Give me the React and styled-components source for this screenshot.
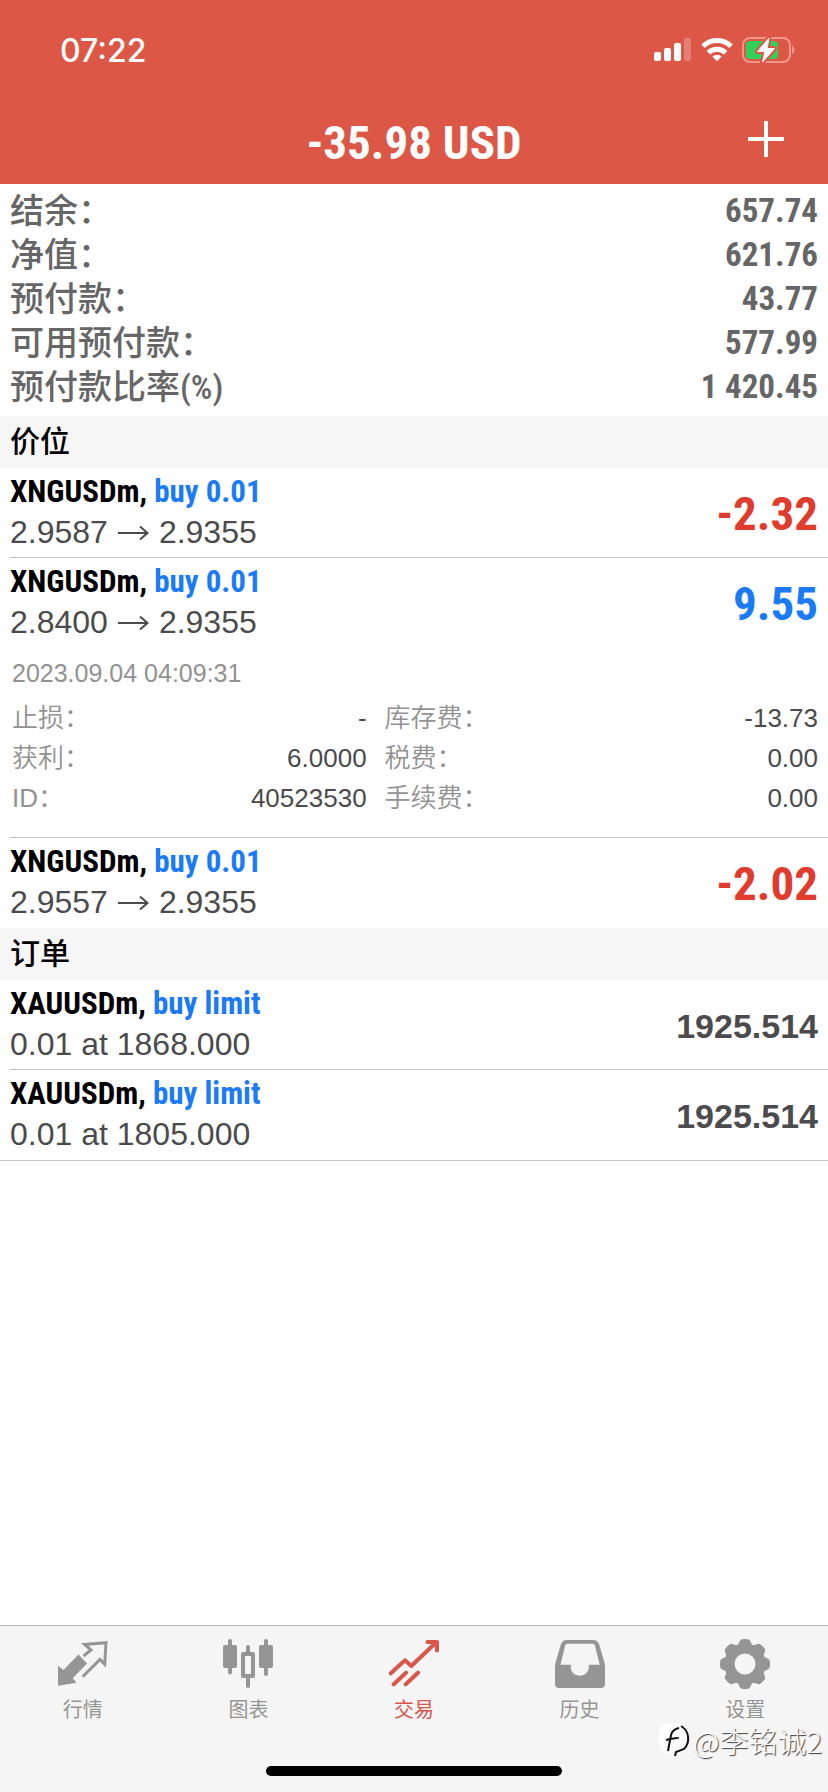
import React from 'react';
import styled, { createGlobalStyle } from 'styled-components';

const color = {
    header: '#dd5746',
    red: '#e13b2e',
    blue: '#1a7af8',
    text: '#4b4b4d',
    summary: '#666666',
    muted: '#929292',
    line: '#c6c6c8',
    band: '#f6f6f6',
};

const sans = '"Liberation Sans", "Noto Sans CJK SC", sans-serif';
const narrow = '"Liberation Sans Narrow", "Roboto Condensed", "Liberation Sans", "Noto Sans CJK SC", sans-serif';

const summary = [
    { label: '结余：', value: '657.74' },
    { label: '净值：', value: '621.76' },
    { label: '预付款：', value: '43.77' },
    { label: '可用预付款：', value: '577.99' },
    { label: '预付款比率(%)', value: '1 420.45' },
];

const positions = [
    { id: 1, symbol: 'XNGUSDm', side: 'buy 0.01', open: '2.9587', current: '2.9355', profit: '-2.32' },
    {
        id: 2,
        symbol: 'XNGUSDm',
        side: 'buy 0.01',
        open: '2.8400',
        current: '2.9355',
        profit: '9.55',
        time: '2023.09.04 04:09:31',
        details: [
            { label: '止损：', value: '-' },
            { label: '库存费：', value: '-13.73' },
            { label: '获利：', value: '6.0000' },
            { label: '税费：', value: '0.00' },
            { label: 'ID：', value: '40523530' },
            { label: '手续费：', value: '0.00' },
        ],
    },
    { id: 3, symbol: 'XNGUSDm', side: 'buy 0.01', open: '2.9557', current: '2.9355', profit: '-2.02' },
];

const orders = [
    { id: 1, symbol: 'XAUUSDm', side: 'buy limit', text: '0.01 at 1868.000', price: '1925.514' },
    { id: 2, symbol: 'XAUUSDm', side: 'buy limit', text: '0.01 at 1805.000', price: '1925.514' },
];

/**
 * Icons.
 */
const SignalIcon = () => (
    <svg width="38" height="24" viewBox="0 0 38 24" fill="#fff" aria-hidden="true">
        <rect x="0" y="14" width="7" height="9" rx="2" />
        <rect x="10" y="10" width="7" height="13" rx="2" />
        <rect x="20" y="5" width="7" height="18" rx="2" />
        <rect x="30" y="0" width="7" height="23" rx="2" opacity="0.25" />
    </svg>
);

const WifiIcon = () => (
    <svg width="32" height="24" viewBox="0 0 32 24" fill="none" stroke="#fff" strokeWidth="5" aria-hidden="true">
        <path d="M2 8.2a20 20 0 0 1 28 0" />
        <path d="M7.4 14.8a12.4 12.4 0 0 1 17.2 0" />
        <path d="M16 23.2l-4.6-4.6a6.6 6.6 0 0 1 9.2 0z" fill="#fff" stroke="none" />
    </svg>
);

const BatteryIcon = () => (
    <svg width="54" height="28" viewBox="0 0 54 28" aria-hidden="true">
        <rect x="1" y="2" width="47" height="24" rx="7" fill="none" stroke="#f0978b" strokeWidth="2" />
        <path d="M50 10c3.500 1 3.500 7 0 8z" fill="#f0978b" />
        <rect x="4" y="5" width="32" height="18" rx="4" fill="#30d158" />
        <path
            d="M27 2L15.500 15.500H23L20.500 26 32.500 12.500H25z"
            fill="#fff"
            stroke={color.header}
            strokeWidth="5"
            strokeLinejoin="round"
        />
        <path d="M27 2L15.500 15.500H23L20.500 26 32.500 12.500H25z" fill="#fff" stroke="#fff" strokeLinejoin="round" />
    </svg>
);

const PlusIcon = () => (
    <svg width="36" height="36" viewBox="0 0 36 36" stroke="#fff" strokeWidth="4" aria-hidden="true">
        <path d="M18 0v36M0 18h36" />
    </svg>
);

const ArrowIcon = () => (
    <svg width="31" height="16" viewBox="0 0 31 16" fill="none" stroke={color.text} strokeWidth="2" aria-hidden="true">
        <path d="M0 8h29M22 1.500L29.500 8 22 14.500" />
    </svg>
);

const QuotesIcon = () => (
    <>
        <path d="M0 28l5.500 4L20.500 16.500l8.500 9L14.700 40.300l3.800 4.400L0 47.700z" fill="currentColor" />
        <path
            d="M25.500 18l7.500-6-6.300-5.500L48 4.700l-1.300 21.600-4.700-4.800L24.700 38.700"
            fill="none"
            stroke="currentColor"
            strokeWidth="3"
        />
    </>
);

const ChartIcon = () => (
    <>
        <path d="M7 3v31.500M43 3v33M25 9v5M25 41v7" stroke="currentColor" strokeWidth="4" strokeLinecap="round" />
        <rect x="0" y="7" width="14" height="23" rx="2" fill="currentColor" />
        <rect x="36" y="7" width="14" height="23" rx="2" fill="currentColor" />
        <rect x="20" y="16" width="10" height="22" fill="none" stroke="currentColor" strokeWidth="4" strokeLinejoin="round" />
    </>
);

const TradeIcon = () => (
    <path
        d="M1.500 35.500L16 22.300l6.300 5.700L46.500 5M38.500 4h9.500v8.500M4.700 46.300L17 34.700M16.700 46.300L29 34.700"
        fill="none"
        stroke="currentColor"
        strokeWidth="4"
        strokeLinecap="round"
        strokeLinejoin="round"
    />
);

const HistoryIcon = () => (
    <path
        fillRule="evenodd"
        fill="currentColor"
        d="M12 2h26c3 0 5 1.500 6 4l5 17c.7 2 1 4 1 6v17c0 2.500-1.500 4-4 4H4c-2.500 0-4-1.500-4-4V29c0-2 .3-4 1-6L6 6c1-2.500 3-4 6-4zM12.500 5.700c-1.300 0-2 .7-2.400 1.800L5.500 26.700h10.300v2.300c0 11.500 18 11.500 18 0v-2.300h10.900L39.900 7.500c-.4-1.100-1.100-1.800-2.400-1.800z"
    />
);

const SettingsIcon = () => (
    <g transform="translate(25 26)">
        <circle r="15.500" fill="none" stroke="currentColor" strokeWidth="10" />
        {[0, 45, 90, 135, 180, 225, 270, 315].map(angle => (
            <path
                key={angle}
                d="M-9-18C-6-19-6-23-4-24.500Q0-25.500 4-24.500C6-23 6-19 9-18z"
                fill="currentColor"
                transform={`rotate(${angle})`}
            />
        ))}
    </g>
);

const tabs = [
    { label: '行情', icon: QuotesIcon },
    { label: '图表', icon: ChartIcon },
    { label: '交易', icon: TradeIcon, active: true },
    { label: '历史', icon: HistoryIcon },
    { label: '设置', icon: SettingsIcon },
];

const BadgeIcon = () => (
    <svg width="32" height="34" viewBox="0 0 32 34" fill="none" aria-hidden="true">
        <rect x="0" y="0" width="29" height="30" rx="10" fill="#fff" />
        <path d="M22 3C31 8 31 20 25 26l-8 3-1 4" stroke="#111" strokeWidth="2" />
        <path d="M9 28l3-16c1-4 3-6 8-7M7 17l4-1 7-1" stroke="#111" strokeWidth="2" />
        <circle cx="19" cy="15" r="1" fill="#111" />
    </svg>
);

/**
 * Component that renders the trade page.
 */
const App = () => (
    <Page>
        <GlobalStyle />
        <Header>
            <StatusBar>
                <Clock>07:22</Clock>
                <StatusIcons>
                    <SignalIcon />
                    <WifiIcon />
                    <BatteryIcon />
                </StatusIcons>
            </StatusBar>
            <TitleBar>
                <Title>-35.98 USD</Title>
                <AddButton type="button" aria-label="+">
                    <PlusIcon />
                </AddButton>
            </TitleBar>
        </Header>
        <Content>
            <Summary>
                {summary.map(item => (
                    <SummaryRow key={item.label}>
                        <SummaryLabel>{item.label}</SummaryLabel>
                        <SummaryValue>{item.value}</SummaryValue>
                    </SummaryRow>
                ))}
            </Summary>
            <SectionTitle>价位</SectionTitle>
            <List>
                {positions.map(item => (
                    <Item key={item.id}>
                        <ItemMain>
                            <div>
                                <Symbol>
                                    {item.symbol}, <Side>{item.side}</Side>
                                </Symbol>
                                <Price>
                                    {item.open}
                                    <ArrowIcon />
                                    {item.current}
                                </Price>
                            </div>
                            <Profit $loss={item.profit.startsWith('-')}>{item.profit}</Profit>
                        </ItemMain>
                        {item.details && (
                            <Details>
                                <Time>{item.time}</Time>
                                <DetailGrid>
                                    {item.details.map(detail => (
                                        <DetailRow key={detail.label}>
                                            <DetailLabel>{detail.label}</DetailLabel>
                                            <DetailValue>{detail.value}</DetailValue>
                                        </DetailRow>
                                    ))}
                                </DetailGrid>
                            </Details>
                        )}
                    </Item>
                ))}
            </List>
            <SectionTitle>订单</SectionTitle>
            <List $closed>
                {orders.map(item => (
                    <Item key={item.id}>
                        <ItemMain>
                            <div>
                                <Symbol>
                                    {item.symbol}, <Side>{item.side}</Side>
                                </Symbol>
                                <Price>{item.text}</Price>
                            </div>
                            <OrderPrice>{item.price}</OrderPrice>
                        </ItemMain>
                    </Item>
                ))}
            </List>
        </Content>
        <Footer>
            <TabBar>
                {tabs.map(({ label, icon: Icon, active }) => (
                    <Tab key={label} type="button" $active={active}>
                        <svg width="50" height="52" viewBox="0 0 50 52" aria-hidden="true">
                            <Icon />
                        </svg>
                        {label}
                    </Tab>
                ))}
            </TabBar>
            <HomeIndicator />
            <Watermark>
                <BadgeIcon />
                @李铭诚2
            </Watermark>
        </Footer>
    </Page>
);

const GlobalStyle = createGlobalStyle`
    * {
        box-sizing: border-box;
    }

    body {
        margin: 0;
        background: #fff;
        font-family: ${sans};
    }

    h1, h2, dl, dd, ul, p {
        margin: 0;
        padding: 0;
    }

    svg {
        display: block;
        flex: none;
    }
`;

const Page = styled.div`
    display: flex;
    flex-direction: column;
    min-height: 100vh;
`;

/**
 * The red header.
 */
const Header = styled.header`
    color: #fff;
    background: ${color.header};
`;

const StatusBar = styled.div`
    display: flex;
    align-items: center;
    justify-content: space-between;
    height: 100px;
    padding: 0 32px 0 60px;
`;

const Clock = styled.span`
    font: 500 32px Inter, sans-serif;
`;

const StatusIcons = styled.div`
    display: flex;
    align-items: center;
    gap: 9px;
`;

const TitleBar = styled.div`
    display: grid;
    grid-template-columns: 1fr auto 1fr;
    align-items: center;
    height: 84px;
    padding: 0 44px;
`;

const Title = styled.h1`
    grid-column: 2;
    font: 700 47px ${narrow};
`;

const AddButton = styled.button`
    justify-self: end;
    padding: 0 0 6px;
    border: 0;
    background: none;
`;

/**
 * Everything between the header and the tab bar.
 */
const Content = styled.main`
    flex: 1;
`;

const Summary = styled.dl`
    padding: 5px 10px 7px;
    color: ${color.summary};
`;

const SummaryRow = styled.div`
    display: flex;
    justify-content: space-between;
    height: 44px;
    line-height: 44px;
`;

const SummaryLabel = styled.dt`
    font-family: ${narrow};
    font-size: 34px;
    font-weight: 500;
`;

const SummaryValue = styled.dd`
    font-family: ${narrow};
    font-size: 33px;
    font-weight: 700;
`;

const SectionTitle = styled.h2`
    padding: 0 10px;
    color: #000;
    background: ${color.band};
    font-size: 30px;
    font-weight: 500;
    line-height: 52px;
`;

const Item = styled.li`
    margin-left: 10px;
    border-bottom: 1px solid ${color.line};
`;

const List = styled.ul`
    list-style: none;
    border-bottom: ${props => (props.$closed ? `1px solid ${color.line}` : '0')};

    ${Item}:last-child {
        border-bottom-color: transparent;
    }
`;

const ItemMain = styled.div`
    display: flex;
    align-items: center;
    justify-content: space-between;
    padding: 3px 10px 4px 0;
`;

const Symbol = styled.p`
    color: #000;
    font-family: ${narrow};
    font-size: 31px;
    font-weight: 700;
    line-height: 41px;
`;

const Side = styled.span`
    color: ${color.blue};
`;

const Price = styled.p`
    display: flex;
    align-items: center;
    gap: 10px;
    color: ${color.text};
    font-size: 32px;
    line-height: 41px;
`;

const Profit = styled.span`
    padding-top: 4px;
    color: ${props => (props.$loss ? color.red : color.blue)};
    font-family: ${narrow};
    font-size: 47px;
    font-weight: 700;
    line-height: 78px;
`;

const OrderPrice = styled.span`
    padding-top: 4px;
    color: ${color.text};
    font-size: 34px;
    font-weight: 700;
`;

/**
 * The expanded part of a position.
 */
const Details = styled.div`
    padding: 6px 10px 19px 2px;
    font-size: 26px;
    line-height: 40px;
`;

const Time = styled.p`
    color: ${color.muted};
    font-size: 25px;
`;

const DetailGrid = styled.dl`
    display: grid;
    grid-template-columns: 9fr 11fr;
    column-gap: 18px;
    padding-top: 5px;
`;

const DetailRow = styled.div`
    display: flex;
    justify-content: space-between;
    height: 40px;
`;

const DetailLabel = styled.dt`
    color: ${color.muted};
    font-weight: 350;
`;

const DetailValue = styled.dd`
    color: ${color.text};
`;

/**
 * Tab bar with the home indicator below.
 */
const Footer = styled.footer`
    position: relative;
    padding-bottom: 16px;
    border-top: 1px solid #b4b4b4;
    background: #f5f5f5;
`;

const TabBar = styled.nav`
    display: grid;
    grid-template-columns: repeat(5, 1fr);
    height: 140px;
`;

const Tab = styled.button`
    display: flex;
    flex-direction: column;
    align-items: center;
    gap: 5px;
    padding: 12px 0 0;
    border: 0;
    background: none;
    color: ${props => (props.$active ? '#d9564b' : '#959595')};
    font-family: ${sans};
    font-size: 20px;
    line-height: 30px;
`;

const HomeIndicator = styled.div`
    width: 296px;
    height: 10px;
    margin: 0 auto;
    border-radius: 5px;
    background: #000;
`;

const Watermark = styled.div`
    position: absolute;
    right: 6px;
    bottom: 32px;
    display: flex;
    align-items: center;
    gap: 2px;
    color: #fff;
    font-family: "Noto Sans CJK SC", sans-serif;
    font-size: 29px;
    font-weight: 300;
    line-height: 40px;
    text-shadow: 1px 1px 1px #333;
`;

export default App;
